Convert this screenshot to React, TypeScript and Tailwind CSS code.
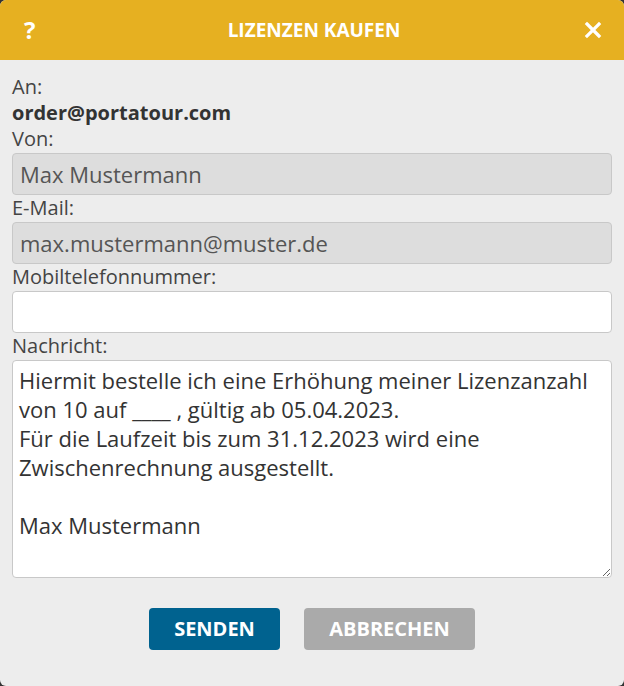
import React from "react";

const MESSAGE = `Hiermit bestelle ich eine Erhöhung meiner Lizenzanzahl von 10 auf ____ , gültig ab 05.04.2023.
Für die Laufzeit bis zum 31.12.2023 wird eine Zwischenrechnung ausgestellt.

Max Mustermann`;

function Label({ children }: { children: React.ReactNode }) {
  return <div className="text-[20px] leading-[26px] text-[#444]">{children}</div>;
}

export default function App() {
  return (
    <div className="h-[686px] w-[624px] bg-[#333] font-['Open_Sans',sans-serif]">
      <div className="flex h-full flex-col overflow-hidden rounded-[6px] bg-[#ededed]">
        <header className="flex h-[60px] shrink-0 items-center bg-[#e6b021] px-[24px] text-white">
          <span className="w-[20px] text-[24px] font-bold leading-none">?</span>
          <h1 className="flex-1 text-center text-[19px] font-bold leading-none">
            LIZENZEN KAUFEN
          </h1>
          <svg width="18" height="18" viewBox="0 0 18 18" className="mr-[-2px]">
            <path d="M3 3 L15 15 M15 3 L3 15" stroke="white" strokeWidth="3.2" strokeLinecap="square" />
          </svg>
        </header>

        <div className="flex flex-1 flex-col px-[12px] pt-[14px]">
          <Label>An:</Label>
          <div className="text-[20px] font-bold leading-[26px] text-[#333]">order@portatour.com</div>
          <Label>Von:</Label>
          <input
            readOnly
            value="Max Mustermann"
            className="mt-[1px] h-[42px] w-full rounded-[4px] border border-[#c8c8c8] bg-[#dddddd] px-[7px] text-[22px] text-[#555] outline-none"
          />
          <Label>E-Mail:</Label>
          <input
            readOnly
            value="max.mustermann@muster.de"
            className="mt-[1px] h-[42px] w-full rounded-[4px] border border-[#c8c8c8] bg-[#dddddd] px-[7px] text-[22px] text-[#555] outline-none"
          />
          <Label>Mobiltelefonnummer:</Label>
          <input className="mt-[1px] h-[42px] w-full rounded-[4px] border border-[#c8c8c8] bg-white px-[7px] text-[22px] text-[#333] outline-none" />
          <Label>Nachricht:</Label>
          <textarea
            defaultValue={MESSAGE}
            className="mt-[1px] h-[218px] w-full resize-y rounded-[4px] border border-[#c8c8c8] bg-white px-[6px] pt-[5px] text-[22px] leading-[29px] text-[#333] outline-none"
          />

          <div className="mt-[30px] flex justify-center gap-[24px]">
            <button className="h-[42px] w-[131px] rounded-[4px] bg-[#00628f] text-[20px] font-bold text-white">
              SENDEN
            </button>
            <button className="h-[42px] w-[171px] rounded-[4px] bg-[#aaaaaa] text-[20px] font-bold text-white">
              ABBRECHEN
            </button>
          </div>
        </div>
      </div>
    </div>
  );
}
